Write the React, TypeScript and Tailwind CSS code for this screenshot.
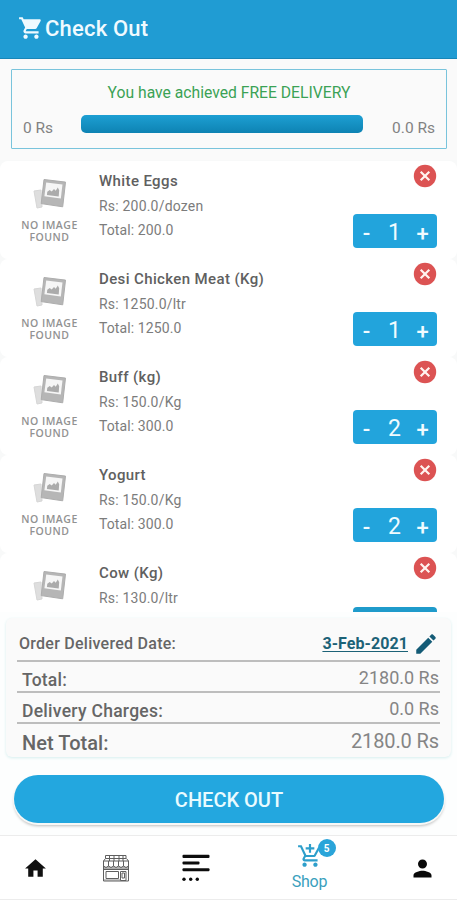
import React from "react";

const items = [
  { name: "White Eggs", rate: "Rs: 200.0/dozen", total: "Total: 200.0", qty: 1 },
  { name: "Desi Chicken Meat (Kg)", rate: "Rs: 1250.0/ltr", total: "Total: 1250.0", qty: 1 },
  { name: "Buff (kg)", rate: "Rs: 150.0/Kg", total: "Total: 300.0", qty: 2 },
  { name: "Yogurt", rate: "Rs: 150.0/Kg", total: "Total: 300.0", qty: 2 },
  { name: "Cow (Kg)", rate: "Rs: 130.0/ltr", total: null, qty: null },
];

function CartIcon() {
  return (
    <svg className="-mt-[3px] h-[26px] w-[26px] shrink-0" viewBox="0 0 24 24" fill="#effaff">
      <path d="M7 18c-1.1 0-1.990.9-1.990 2S5.900 22 7 22s2-.9 2-2-.9-2-2-2zM1 2v2h2l3.600 7.590-1.350 2.450c-.16.28-.25.61-.25.96 0 1.100.9 2 2 2h12v-2H7.420c-.14 0-.25-.11-.25-.25l.03-.12.9-1.630h7.450c.75 0 1.410-.41 1.750-1.030l3.580-6.490c.08-.14.12-.31.12-.48 0-.55-.45-1-1-1H5.210l-.94-2H1zm16 16c-1.100 0-1.990.9-1.990 2s.89 2 1.990 2 2-.9 2-2-.9-2-2-2z" />
    </svg>
  );
}

function CartPlusIcon() {
  return (
    <svg className="h-[26px] w-[26px]" viewBox="0 0 24 24" fill="#2e9fcb">
      <path d="M11 9h2V6h3V4h-3V1h-2v3H8v2h3v3zm-4 9c-1.1 0-1.99.9-1.99 2S5.900 22 7 22s2-.9 2-2-.9-2-2-2zm10 0c-1.1 0-1.99.9-1.99 2s.89 2 1.99 2 2-.9 2-2-.9-2-2-2zm-9.830-3.250l.03-.12.9-1.630h7.450c.75 0 1.410-.41 1.750-1.030l3.860-7.010L19.420 4h-.01l-1.100 2-2.760 5H8.530l-.13-.27L6.160 6l-.95-2-.94-2H1v2h2l3.600 7.590-1.350 2.450c-.16.28-.25.61-.25.96 0 1.100.9 2 2 2h12v-2H7.420c-.13 0-.25-.11-.25-.25z" />
    </svg>
  );
}

function PhotoPlaceholder({ caption }: { caption: boolean }) {
  return (
    <div className="flex w-[99px] shrink-0 flex-col items-center pt-[16px]">
      <svg className="h-[34px] w-[36px]" viewBox="0 0 36 34">
        <path d="M2 14l7-1 1 17-5 1z" fill="#dedede" stroke="#d6d6d6" />
        <path d="M12 2.500l21.500 2.600-2.800 24.700-21.500-3.200z" fill="#b6b6b6" stroke="#adadad" strokeWidth="1" strokeLinejoin="round" />
        <path d="M14.200 5.400l16.300 2-1.700 14-16.400-2.100z" fill="#f6f6f6" />
        <path d="M14.900 18.100l.4-3.300 2.400-1.800 2 1.400 2.300-2.400 1.700 1.700 2.100-3.200 1.400 2.800-.5 6.300z" fill="#ababab" />
      </svg>
      {caption && (
        <div className="mt-[8px] text-center font-['Open_Sans',sans-serif] text-[10.500px] font-semibold leading-[12px] tracking-[0.500px] text-[#929292]">
          NO IMAGE
          <br />
          FOUND
        </div>
      )}
    </div>
  );
}

function ItemRow({ item }: { item: (typeof items)[number] }) {
  const clipped = item.qty === null;
  return (
    <div className={clipped ? "flex h-[59px] shrink-0 rounded-t-lg bg-white" : "flex h-[98px] shrink-0 rounded-lg bg-white"}>
      <PhotoPlaceholder caption={!clipped} />
      <div className="flex flex-1 flex-col whitespace-nowrap pt-[8px] text-[#7c7c7c]">
        <div className="h-[25px] text-[15px] font-medium leading-[24px] tracking-[0.380px] text-[#606060]">{item.name}</div>
        <div className="h-[24px] text-[14px] leading-[24px] tracking-[0.200px]">{item.rate}</div>
        {item.total && <div className="text-[14px] leading-[24px] tracking-[0.100px]">{item.total}</div>}
      </div>
      <div className={clipped ? "mr-[20px] flex w-[84px] flex-col items-end justify-between pt-[3px]" : "mr-[20px] flex w-[84px] flex-col items-end justify-between pb-[11px] pt-[3px]"}>
        <svg className="h-[24px] w-[24px]" viewBox="0 0 24 24">
          <circle cx="12" cy="12" r="11.200" fill="#dc5353" />
          <path d="M7.700 7.700l8.600 8.600M16.300 7.700l-8.600 8.600" stroke="#fff4f0" strokeWidth="2.200" />
        </svg>
        {clipped ? (
          <div className="h-[5px] w-[84px] rounded-t-[4px] bg-[#1f9bcb]" />
        ) : (
          <div className="flex h-[34px] w-[84px] items-center rounded-[4px] bg-[#22a4dc] pt-[4px] text-[22px] text-[#f0fbff]">
            <span className="w-[27px] text-center font-medium">-</span>
            <span className="w-[29px] text-center text-[23px]">{item.qty}</span>
            <span className="w-[27px] text-center font-medium">+</span>
          </div>
        )}
      </div>
    </div>
  );
}

export default function App() {
  return (
    <div className="flex h-[900px] w-[457px] flex-col overflow-hidden bg-[#fdfefe] font-[Roboto,sans-serif]">
      <header className="flex h-[59px] shrink-0 items-center border-b border-[#1786b8] bg-[#209cd3] pl-[18px] text-[22px] font-medium text-[#effaff]">
        <CartIcon />
        <span className="-mt-px ml-px whitespace-nowrap tracking-[0.200px]">Check Out</span>
      </header>

      <section className="h-[101px] shrink-0 bg-[#fafafa] px-[11px] pt-[10px]">
        <div className="h-[80px] w-[436px] rounded-[1px] border border-[#79c4dc] text-[15px]">
          <div className="mt-[13px] text-center text-[15.700px] leading-[20px] text-[#3ba255]">You have achieved FREE DELIVERY</div>
          <div className="mt-[12px] flex justify-between pl-[11px] pr-[11px] text-[#828282]">
            <span className="mt-[4px] w-[57px] text-[15.500px] leading-[18px]">0 Rs</span>
            <div className="h-[18px] w-[282px] rounded-[5px] bg-linear-to-b from-[#1d9fd3] to-[#0d83b3]" />
            <span className="mt-[4px] w-[72px] text-right text-[15.500px] leading-[18px]">0.0 Rs</span>
          </div>
        </div>
      </section>

      <main className="flex h-[452px] shrink-0 flex-col overflow-hidden bg-[#f8f9f9] pt-px">
        {items.map((item) => (
          <ItemRow key={item.name} item={item} />
        ))}
      </main>

      <section className="mx-[6px] mt-[6px] flex h-[139px] shrink-0 flex-col rounded-[6px] bg-[#fafafa] px-[11px] text-[#666] shadow-[0_1px_3px_#d5eeee]">
        <div className="flex h-[44px] items-center border-b-2 border-[#bdbdbd] pl-[2px] pt-[9px] font-medium">
          <span className="text-[16px] tracking-[0.260px]">Order Delivered Date:</span>
          <span className="ml-auto text-[16px] font-bold tracking-[0.080px] text-[#1c6277] underline underline-offset-2">3-Feb-2021</span>
          <svg className="ml-[5px] mr-px h-[26px] w-[26px]" viewBox="0 0 24 24" fill="#145b76">
            <path d="M3 17.250V21h3.750L17.810 9.940l-3.750-3.750L3 17.250zM20.710 7.040c.39-.39.39-1.020 0-1.410l-2.340-2.340c-.39-.39-1.020-.39-1.410 0l-1.830 1.830 3.750 3.750 1.830-1.830z" />
          </svg>
        </div>
        <div className="flex h-[31px] justify-between border-b-2 border-[#bdbdbd] pl-[5px] pr-px text-[18px]">
          <span className="pt-[6px] text-[17.500px] font-medium leading-[25px] tracking-[0.200px]">Total:</span>
          <span className="leading-[31px] text-[#858585]">2180.0 Rs</span>
        </div>
        <div className="flex h-[31px] justify-between border-b-2 border-[#bdbdbd] pl-[5px] pr-px text-[18px]">
          <span className="pt-[6px] text-[17.500px] font-medium leading-[25px] tracking-[0.280px]">Delivery Charges:</span>
          <span className="leading-[31px] text-[#858585]">0.0 Rs</span>
        </div>
        <div className="flex h-[33px] justify-between pl-[5px] pr-px text-[20px]">
          <span className="pt-[6px] font-medium leading-[26px] tracking-[0.050px]">Net Total:</span>
          <span className="leading-[34px] tracking-[-0.120px] text-[#858585]">2180.0 Rs</span>
        </div>
      </section>

      <button className="mx-[14px] mt-[18px] h-[48px] w-[430px] shrink-0 rounded-full bg-[#23a7df] pt-[2px] text-[20px] font-medium text-[#e9fbff] shadow-[0_1px_0_1px_#f8f8f6,0_3px_3px_#bdbdbd]">CHECK OUT</button>

      <nav className="mt-[12px] flex h-[65px] shrink-0 border-b border-t border-[#ececec] bg-white">
        <div className="flex w-[71px] items-center justify-center">
          <svg className="mt-px h-[25px] w-[25px]" viewBox="0 0 24 24" fill="#111"><path d="M10 20v-6h4v6h5v-8h3L12 3 2 12h3v8z" /></svg>
        </div>
        <div className="flex w-[89px] items-center justify-center">
          <svg className="mt-px h-[28px] w-[28px]" viewBox="0 0 28 28" fill="none" stroke="#5f5f5f" strokeWidth="1">
            <path d="M3.500 1.500h20.500v3H3.500zM3.500 4.500l-2 2.500v7h25V7l-2-2.500M1.500 7h25M7.500 1.500v5.500M12 1.500v5.500M17 1.500v5.500M21 1.500v5.500" />
            <path d="M1.500 12q2.500 3 5 0q2.500 3 5 0q2.500 3 5 0q2.500 3 5 0q2.500 3 5 0M6.500 7v5.500M11.500 7v5.500M16.500 7v5.500M21.500 7v5.500" />
            <path d="M1.500 14v13h25V14M1.500 15.500h25M4 17.500h12.500v7H4zM18.500 17.500h5.500v9h-5.500zM20 19h2.500v5H20z" />
            <path d="M2 26h16" stroke="#888" />
          </svg>
        </div>
        <div className="flex w-[71px] items-center justify-center">
          <svg className="h-[28px] w-[28px]" viewBox="0 0 28 28" fill="#0d0d0d">
            <rect x="0.500" y="0.700" width="27" height="3.200" rx="1" />
            <rect x="0.500" y="7.600" width="17" height="3" rx="1" />
            <rect x="0.500" y="14.300" width="27" height="3" rx="1" />
            <circle cx="2" cy="25.300" r="1.700" />
            <circle cx="8.700" cy="25.300" r="1.700" />
            <circle cx="15.300" cy="25.300" r="1.700" />
          </svg>
        </div>
        <div className="flex w-[157px] flex-col items-center pt-[7px] text-[15px] text-[#3a9fbd]">
          <div className="relative h-[26px] w-[26px]">
            <CartPlusIcon />
            <span className="absolute left-[21px] top-[-4px] flex h-[18px] w-[18px] items-center justify-center rounded-full bg-[#2aa4d9] text-[10px] font-bold text-white">5</span>
          </div>
          <span className="mt-[2px] text-[16px] leading-[22px] tracking-[-0.200px]">Shop</span>
        </div>
        <div className="flex w-[69px] items-center justify-center">
          <svg className="mt-px h-[27px] w-[27px]" viewBox="0 0 24 24" fill="#090909"><path d="M12 12c2.210 0 4-1.790 4-4s-1.790-4-4-4-4 1.790-4 4 1.790 4 4 4zm0 2c-2.670 0-8 1.340-8 4v2h16v-2c0-2.660-5.330-4-8-4z" /></svg>
        </div>
      </nav>
    </div>
  );
}
